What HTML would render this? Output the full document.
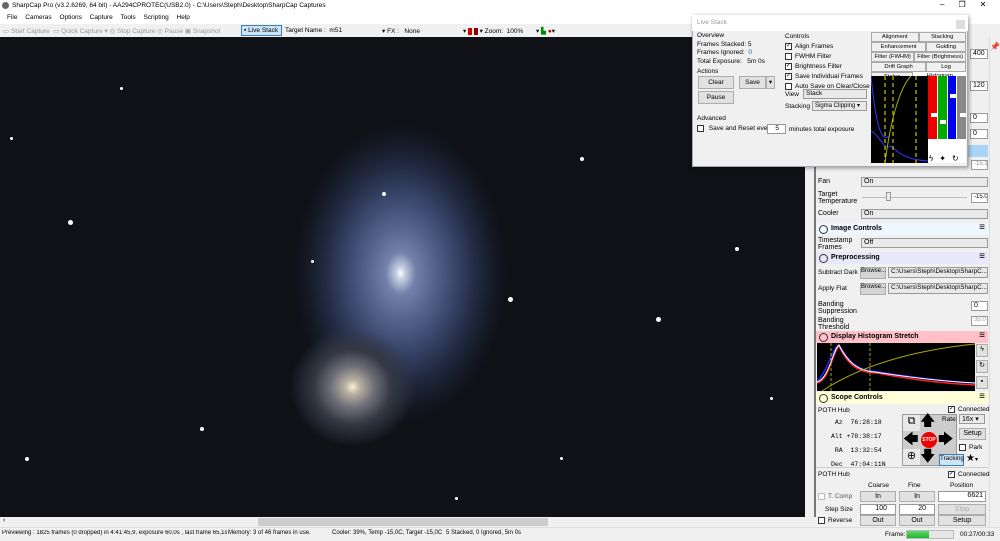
<!DOCTYPE html>
<html><head><meta charset="utf-8"><style>
*{box-sizing:border-box;margin:0;padding:0}
body{width:1000px;height:541px;overflow:hidden;background:#f0f0f0;font-family:"Liberation Sans",sans-serif;font-size:7px;color:#000;position:relative}
.a{position:absolute;white-space:nowrap}
.btn{position:absolute;background:#e1e1e1;border:1px solid #adadad;text-align:center;font-size:7px;line-height:1.3}
.inp{position:absolute;background:#fff;border:1px solid #999;font-size:7px;padding:0 2px;overflow:hidden}
.cb{display:inline-block;width:7px;height:7px;border:1px solid #333;background:#fff;vertical-align:middle;margin-right:3px;font-size:6px;line-height:5px;text-align:center}
.hdr{position:absolute;left:816px;width:172px;height:12px;font-size:7px;font-weight:bold;line-height:12px;padding-left:15px}
.hdr:before{content:"";position:absolute;left:3px;top:2px;width:7px;height:7px;border:1px solid #333;border-radius:50%}
.hdr:after{content:"≡";position:absolute;right:3px;top:-1px;font-size:10px;font-weight:normal}
.star{position:absolute;border-radius:50%;background:#fff}
.ls{font-size:6.5px}
</style></head><body>
<div class="a" style="left:0;top:0;width:1000px;height:12px;background:#fff"></div>
<div class="a" style="left:2px;top:2px;width:7px;height:7px;border-radius:50%;background:#666"></div>
<div class="a" style="left:12px;top:2px;font-size:6.5px">SharpCap Pro (v3.2.6269, 64 bit) - AA294CPROTEC(USB2.0) - C:\Users\Steph\Desktop\SharpCap Captures</div>
<div class="a" style="left:940px;top:0;font-size:8px;letter-spacing:14px">–❐✕</div>
<div class="a" style="left:0;top:12px;width:1000px;height:12px;background:#fff"></div>
<div class="a" style="left:7px;top:14px;word-spacing:6px;font-size:6.5px">File Cameras Options Capture Tools Scripting Help</div>
<div class="a" style="left:0;top:24px;width:1000px;height:13px;background:#f0f0f0"></div>
<div class="a" style="left:3px;top:27px;color:#999;font-size:6.5px">▭ Start Capture &nbsp;▭ Quick Capture ▾ ◎ Stop Capture ◎ Pause ▣ Snapshot</div>
<div class="a" style="left:241px;top:25px;width:41px;height:11px;border:1px solid #3c7fb1;background:#cce4f7"></div>
<div class="a" style="left:244px;top:27px;font-size:6.5px">▪ Live Stack</div>
<div class="a" style="left:285px;top:27px;font-size:6.5px">Target Name : &nbsp;m51</div>
<div class="a" style="left:382px;top:27px;font-size:6.5px">▾ FX : &nbsp; None</div>
<div class="a" style="left:463px;top:27px;font-size:6.5px">▾ <span style="background:#c00;color:#c00">■</span> <span style="background:#800;color:#800">■</span> ▾ Zoom: &nbsp;100% &nbsp; &nbsp; &nbsp; ▾ <span style="color:#080">▙</span> <span style="color:#a00">●</span>▾</div>
<div class="a" style="left:0;top:37px;width:805px;height:480px;background:#0f1117;overflow:hidden">
 <div class="a" style="left:295px;top:75px;width:220px;height:310px;border-radius:50%;background:radial-gradient(closest-side at 48% 52%,#fff 0,#c8d0e2 4%,#7282aa 14%,#55638c 32%,#39456a 52%,#222a42 72%,#151a26 88%,rgba(15,17,23,0) 100%)"></div>
 <div class="a" style="left:290px;top:290px;width:125px;height:120px;border-radius:50%;background:radial-gradient(closest-side at 50% 50%,#fff0d0 0,#b8b0a0 12%,#6e6e78 35%,#343844 62%,rgba(15,17,23,0) 100%)"></div>
 <div class="star" style="left:382px;top:155px;width:4px;height:4px"></div>
 <div class="star" style="left:508px;top:260px;width:5px;height:5px"></div>
 <div class="star" style="left:68px;top:183px;width:5px;height:5px"></div>
 <div class="star" style="left:311px;top:223px;width:3px;height:3px"></div>
 <div class="star" style="left:656px;top:280px;width:5px;height:5px"></div>
 <div class="star" style="left:580px;top:120px;width:4px;height:4px"></div>
 <div class="star" style="left:120px;top:50px;width:3px;height:3px"></div>
 <div class="star" style="left:10px;top:100px;width:3px;height:3px"></div>
 <div class="star" style="left:735px;top:210px;width:4px;height:4px"></div>
 <div class="star" style="left:200px;top:390px;width:4px;height:4px"></div>
 <div class="star" style="left:560px;top:420px;width:3px;height:3px"></div>
 <div class="star" style="left:25px;top:420px;width:4px;height:4px"></div>
 <div class="star" style="left:770px;top:360px;width:3px;height:3px"></div>
 <div class="star" style="left:455px;top:460px;width:3px;height:3px"></div>
</div>
<div class="a" style="left:0;top:517px;width:805px;height:10px;background:#f0f0f0"></div>
<div class="a" style="left:258px;top:518px;width:290px;height:8px;background:#cdcdcd"></div>
<div class="a" style="left:3px;top:517px;font-size:7px">‹</div>
<div class="a" style="left:0;top:527px;width:1000px;height:14px;background:#f0f0f0;border-top:1px solid #ddd"></div>
<div class="a" style="left:2px;top:530px;font-size:6px;width:225px;overflow:hidden">Previewing : 1825 frames (0 dropped) in 4:41:45,9, exposure 60,0s , last frame 65,1s</div>
<div class="a" style="left:228px;top:530px;font-size:6px">Memory: 3 of 46 frames in use.</div>
<div class="a" style="left:332px;top:530px;font-size:6px">Cooler: 39%, Temp -15,0C, Target -15,0C</div>
<div class="a" style="left:446px;top:530px;font-size:6px">5 Stacked, 0 Ignored, 5m 0s</div>
<div class="a" style="left:885px;top:531px;font-size:6.5px">Frame:</div>
<div class="a" style="left:906px;top:530px;width:48px;height:9px;background:#e6e6e6;border:1px solid #bbb"></div>
<div class="a" style="left:907px;top:531px;width:22px;height:7px;background:linear-gradient(#5fdc6a,#1fb32e)"></div>
<div class="a" style="left:960px;top:531px;font-size:6.5px">00:27/00:33</div>
<div class="a" style="left:806px;top:37px;width:194px;height:490px;background:#f0f0f0"></div>
<div class="a" style="left:814px;top:37px;width:2px;height:480px;background:#777"></div>
<div class="a" style="left:989px;top:37px;width:11px;height:490px;background:#f0f0f0;border-left:1px solid #ddd"></div>
<div class="a" style="left:990px;top:42px;font-size:8px">📌</div>
<div class="a" style="left:960px;top:145px;width:28px;height:12px;background:#a8d4f8"></div>
<div class="inp" style="left:970px;top:49px;width:18px;height:10px">400</div>
<div class="inp" style="left:970px;top:81px;width:18px;height:10px">120</div>
<div class="inp" style="left:970px;top:113px;width:18px;height:10px">0</div>
<div class="inp" style="left:970px;top:129px;width:18px;height:10px">0</div>
<div class="inp" style="left:971px;top:160px;width:17px;height:10px;color:#888;font-size:6px">-15.1</div>
<div class="a" style="left:818px;top:178px">Fan</div>
<div class="inp" style="left:861px;top:177px;width:127px;height:10px;background:#e9e9e9">On</div>
<div class="a" style="left:818px;top:191px;line-height:1">Target<br>Temperature</div>
<div class="a" style="left:862px;top:197px;width:105px;height:1px;background:#bbb"></div>
<div class="a" style="left:886px;top:192px;width:5px;height:9px;background:#eee;border:1px solid #999"></div>
<div class="inp" style="left:971px;top:193px;width:17px;height:10px;font-size:6px">-15.0</div>
<div class="a" style="left:818px;top:210px">Cooler</div>
<div class="inp" style="left:861px;top:209px;width:127px;height:10px;background:#e9e9e9">On</div>
<div class="hdr" style="top:223px;background:#eef6ff">Image Controls</div>
<div class="a" style="left:818px;top:237px;line-height:1">Timestamp<br>Frames</div>
<div class="inp" style="left:861px;top:238px;width:127px;height:10px;background:#e9e9e9">Off</div>
<div class="hdr" style="top:252px;background:#e8e8fa">Preprocessing</div>
<div class="a" style="left:818px;top:269px;font-size:6.5px">Subtract Dark</div>
<div class="btn" style="left:860px;top:267px;width:26px;height:12px;background:#d4d4d4;font-size:6px">Browse...</div>
<div class="inp" style="left:888px;top:267px;width:100px;height:11px;background:#e9e9e9;font-size:6.3px">C:\Users\Steph\Desktop\SharpC...</div>
<div class="a" style="left:818px;top:285px;font-size:6.5px">Apply Flat</div>
<div class="btn" style="left:860px;top:283px;width:26px;height:12px;background:#d4d4d4;font-size:6px">Browse...</div>
<div class="inp" style="left:888px;top:283px;width:100px;height:11px;background:#e9e9e9;font-size:6.3px">C:\Users\Steph\Desktop\SharpC...</div>
<div class="a" style="left:818px;top:301px;line-height:1">Banding<br>Suppression</div>
<div class="inp" style="left:971px;top:301px;width:17px;height:10px">0</div>
<div class="a" style="left:818px;top:317px;line-height:1">Banding<br>Threshold</div>
<div class="inp" style="left:971px;top:316px;width:17px;height:10px;color:#999;font-size:6px">35.0</div>
<div class="hdr" style="top:331px;background:#ffc0c8">Display Histogram Stretch</div>
<div class="a" style="left:817px;top:343px;width:158px;height:48px;background:#000;overflow:hidden">
<svg width="158" height="48"><path d="M0 38 C10 30,15 5,22 2 C30 15,35 25,55 28 C90 33,120 38,158 40" stroke="#22f" fill="none" stroke-width="1.5"/><path d="M0 40 C12 38,16 8,22 3 C30 20,40 30,60 30 C90 36,120 40,158 42" stroke="#f22" fill="none" stroke-width="1.5"/><path d="M0 39 C12 36,16 6,22 2 C30 18,40 28,58 29 C90 34,120 38,158 40" stroke="#fff" fill="none" stroke-width="1"/><path d="M5 48 C40 25,90 8,158 1" stroke="#aa0" fill="none"/><line x1="14" y1="0" x2="14" y2="48" stroke="#aa0" stroke-dasharray="3 2"/><line x1="53" y1="0" x2="53" y2="48" stroke="#aa0" stroke-dasharray="3 2"/></svg></div>
<div class="btn" style="left:976px;top:344px;width:12px;height:13px">ϟ</div>
<div class="btn" style="left:976px;top:360px;width:12px;height:13px">↻</div>
<div class="btn" style="left:976px;top:376px;width:12px;height:13px">▪</div>
<div class="hdr" style="top:392px;background:#ffffd8">Scope Controls</div>
<div class="a" style="left:818px;top:407px;font-size:6.5px">POTH Hub</div>
<div class="a" style="left:948px;top:406px;font-size:6.5px"><span class="cb">✓</span>Connected</div>
<div class="a" style="left:831px;top:416px;font-family:'Liberation Mono',monospace;line-height:14px;font-size:6.5px">&nbsp;Az &nbsp;76:28:18<br>Alt +78:38:17<br>&nbsp;RA &nbsp;13:32:54<br>Dec &nbsp;47:04:11N</div>
<div class="a" style="left:902px;top:414px;width:55px;height:52px;background:#ccc;border:1px solid #999"></div>
<div class="a" style="left:903px;top:415px;width:17px;height:16px;background:#e8e8e8;text-align:center;font-size:11px">⧉</div>
<div class="a" style="left:903px;top:449px;width:17px;height:16px;background:#e8e8e8;text-align:center;font-size:11px">⊕</div>
<div class="a" style="left:920px;top:413px;font-size:15px;line-height:1">🡅</div>
<div class="a" style="left:920px;top:449px;font-size:15px;line-height:1">🡇</div>
<div class="a" style="left:903px;top:432px;font-size:15px;line-height:1">🡄</div>
<div class="a" style="left:938px;top:432px;font-size:15px;line-height:1">🡆</div>
<div class="a" style="left:921px;top:432px;width:16px;height:16px;border-radius:50%;background:#e00;color:#fff;font-size:5px;font-weight:bold;text-align:center;line-height:16px">STOP</div>
<div class="a" style="left:942px;top:416px;font-size:6.5px">Rate:</div>
<div class="inp" style="left:959px;top:414px;width:26px;height:10px;background:#e9e9e9">16x ▾</div>
<div class="btn" style="left:959px;top:428px;width:27px;height:12px">Setup</div>
<div class="a" style="left:959px;top:444px;font-size:6.5px"><span class="cb"></span>Park</div>
<div class="btn" style="left:939px;top:454px;width:25px;height:12px;background:#cce4f7;border-color:#3c7fb1;font-size:6.3px">Tracking</div>
<div class="a" style="left:966px;top:453px;font-size:10px">★<span style="font-size:6px">▾</span></div>
<div class="a" style="left:816px;top:467px;width:172px;height:1px;background:#ccc"></div>
<div class="a" style="left:818px;top:471px;font-size:6.5px">POTH Hub</div>
<div class="a" style="left:948px;top:471px;font-size:6.5px"><span class="cb">✓</span>Connected</div>
<div class="a" style="left:868px;top:482px;font-size:6.5px">Coarse</div><div class="a" style="left:908px;top:482px;font-size:6.5px">Fine</div><div class="a" style="left:950px;top:482px;font-size:6.5px">Position</div>
<div class="a" style="left:818px;top:493px;color:#555;font-size:6.5px"><span class="cb" style="border-color:#bbb"></span>T. Comp</div>
<div class="btn" style="left:860px;top:491px;width:36px;height:11px">In</div>
<div class="btn" style="left:899px;top:491px;width:36px;height:11px">In</div>
<div class="inp" style="left:938px;top:491px;width:48px;height:11px;text-align:right">6621</div>
<div class="a" style="left:825px;top:506px;font-size:6.5px">Step Size</div>
<div class="inp" style="left:860px;top:504px;width:36px;height:11px;text-align:right;padding-right:8px">100</div>
<div class="inp" style="left:899px;top:504px;width:36px;height:11px;text-align:right;padding-right:8px">20</div>
<div class="btn" style="left:938px;top:504px;width:48px;height:11px;color:#aaa">Stop</div>
<div class="a" style="left:818px;top:517px;font-size:6.5px"><span class="cb"></span>Reverse</div>
<div class="btn" style="left:860px;top:515px;width:36px;height:11px">Out</div>
<div class="btn" style="left:899px;top:515px;width:36px;height:11px">Out</div>
<div class="btn" style="left:938px;top:515px;width:48px;height:11px">Setup</div>
<!-- live stack window -->
<div class="a" style="left:692px;top:15px;width:276px;height:152px;background:#f0f0f0;border:1px solid #aaa;box-shadow:1px 1px 4px rgba(0,0,0,.4)"></div>
<div class="a" style="left:692px;top:15px;width:276px;height:16px;background:#fff"></div>
<div class="a" style="left:697px;top:19px;color:#999;font-size:6.5px">Live Stack</div>
<div class="a" style="left:956px;top:20px;width:9px;height:9px;background:#ddd"></div>
<div class="a ls" style="left:697px;top:32px;line-height:8.5px">Overview<br>Frames Stacked: 5<br>Frames Ignored: &nbsp;<span style="color:#06c">0</span><br>Total Exposure: &nbsp; 5m 0s</div>
<div class="a ls" style="left:697px;top:68px">Actions</div>
<div class="btn ls" style="left:698px;top:76px;width:36px;height:13px;line-height:11px">Clear</div>
<div class="btn ls" style="left:739px;top:76px;width:27px;height:13px;line-height:11px">Save</div>
<div class="btn ls" style="left:766px;top:76px;width:9px;height:13px;line-height:11px">▾</div>
<div class="btn ls" style="left:698px;top:91px;width:36px;height:13px;line-height:11px">Pause</div>
<div class="a ls" style="left:697px;top:115px">Advanced</div>
<div class="a ls" style="left:697px;top:125px"><span class="cb"></span> Save and Reset every</div>
<div class="inp ls" style="left:767px;top:124px;width:19px;height:10px;text-align:right;padding-right:6px">5</div>
<div class="a ls" style="left:789px;top:126px">minutes total exposure</div>
<div class="a ls" style="left:785px;top:32px;line-height:10px">Controls<br><span class="cb">✓</span>Align Frames<br><span class="cb"></span>FWHM Filter<br><span class="cb">✓</span>Brightness Filter<br><span class="cb">✓</span>Save Individual Frames<br><span class="cb"></span>Auto Save on Clear/Close</div>
<div class="a ls" style="left:785px;top:91px">View</div>
<div class="inp ls" style="left:803px;top:89px;width:64px;height:10px;background:#e9e9e9">Stack</div>
<div class="a ls" style="left:785px;top:103px">Stacking</div>
<div class="inp ls" style="left:812px;top:101px;width:55px;height:10px;background:#e9e9e9;font-size:6px">Sigma Clipping ▾</div>
<div class="a" style="left:871px;top:32px;width:95px;font-size:5.8px;line-height:8px">
<div style="display:flex"><div style="flex:1;border:1px solid #aaa;text-align:center">Alignment</div><div style="flex:1;border:1px solid #aaa;text-align:center">Stacking</div></div>
<div style="display:flex"><div style="flex:1.4;border:1px solid #aaa;text-align:center">Enhancement</div><div style="flex:1;border:1px solid #aaa;text-align:center">Guiding</div></div>
<div style="display:flex"><div style="flex:1;border:1px solid #aaa;text-align:center;overflow:hidden">Filter (FWHM)</div><div style="flex:1.2;border:1px solid #aaa;text-align:center;overflow:hidden">Filter (Brightness)</div></div>
<div style="display:flex"><div style="flex:1.4;border:1px solid #aaa;text-align:center">Drift Graph</div><div style="flex:1;border:1px solid #aaa;text-align:center">Log</div></div>
<div style="display:flex"><div style="flex:1;border:1px solid #aaa;text-align:center">Status</div><div style="flex:1.3;background:#fff;text-align:center">Histogram</div></div></div>
<div class="a" style="left:871px;top:76px;width:57px;height:87px;background:#000;overflow:hidden">
<svg width="57" height="87"><path d="M0 55 C10 60,12 75,20 70 C30 80,40 84,57 85" stroke="#33f" fill="none"/><path d="M0 0 C3 30,8 70,18 60" stroke="#33f" fill="none"/><path d="M14 87 C20 40,30 10,40 0" stroke="#aa0" fill="none"/><line x1="14" y1="0" x2="14" y2="87" stroke="#ee0" stroke-dasharray="4 3"/><line x1="22" y1="0" x2="22" y2="87" stroke="#ee0" stroke-dasharray="4 3"/><line x1="45" y1="0" x2="45" y2="87" stroke="#ee0" stroke-dasharray="4 3"/></svg></div>
<div class="a" style="left:928px;top:76px;width:38px;height:63px;display:flex">
<div style="flex:1;background:#e00;border-right:1px solid #fff"></div><div style="flex:1;background:#0a0;border-right:1px solid #fff"></div><div style="flex:1;background:#00e;border-right:1px solid #fff"></div><div style="flex:1;background:#888"></div></div>
<div class="a" style="left:931px;top:113px;width:6px;height:4px;background:#fff"></div>
<div class="a" style="left:940px;top:120px;width:6px;height:4px;background:#fff"></div>
<div class="a" style="left:950px;top:94px;width:6px;height:4px;background:#fff"></div>
<div class="a" style="left:960px;top:113px;width:6px;height:4px;background:#fff"></div>
<div class="a" style="left:928px;top:139px;width:38px;height:24px;background:#fff"></div>
<div class="a" style="left:929px;top:154px;letter-spacing:6px;font-size:8px">ϟ✦↻</div>
</body></html>
